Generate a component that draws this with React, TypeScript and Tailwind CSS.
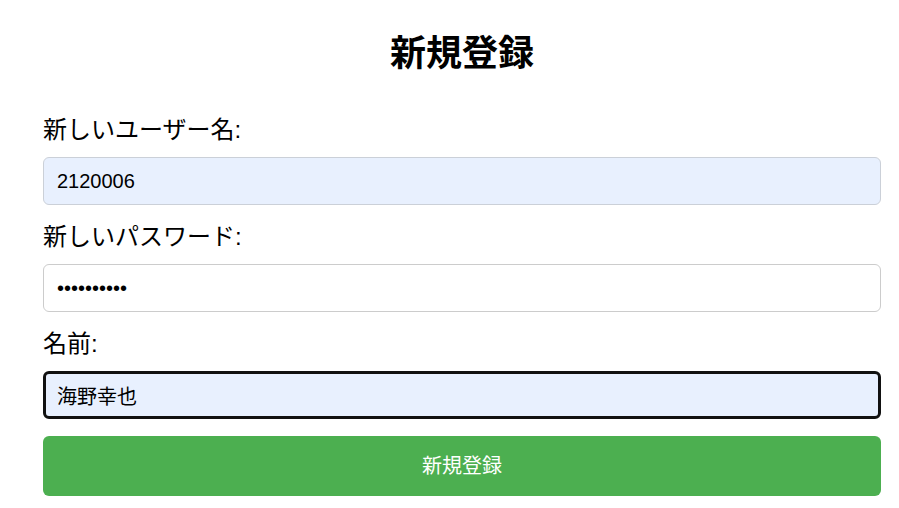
const font = { fontFamily: '"Liberation Sans", "Noto Sans CJK JP", sans-serif' };

const fields = [
  { label: "新しいユーザー名:", value: "2120006", type: "text", style: "autofill" },
  { label: "新しいパスワード:", value: "abcdefghij", type: "password", style: "plain" },
  { label: "名前:", value: "海野幸也", type: "text", style: "focused" },
];

const inputClass = {
  autofill: "border border-[#cbd0d8] bg-[#e8f0fe] pl-[13px]",
  plain: "border border-[#cccccc] bg-white pl-[13px]",
  focused: "border-[3px] border-[#111111] bg-[#e8f0fe] pl-[11px]",
};

const App = () => {
  return (
    <div className="min-h-[508px] bg-white text-black" style={font}>
      <div className="ml-[43px] w-[838px] pt-[30px]">
        <h2 className="h-[48px] text-center text-[36px] font-bold leading-[48px]">新規登録</h2>

        <form className="mt-[34px] flex flex-col" onSubmit={(e) => e.preventDefault()}>
          {fields.map((f, i) => (
            <div key={f.label} className={i === 0 ? "" : "mt-[14px]"}>
              <label className="block h-[36px] text-[24px] leading-[36px]">{f.label}</label>
              <input
                type={f.type}
                readOnly
                value={f.value}
                className={`mt-[9px] box-border block h-[48px] w-full rounded-[6px] pr-3 text-[20px] text-black outline-none ${inputClass[f.style as keyof typeof inputClass]}`}
                style={font}
              />
            </div>
          ))}

          <button
            type="submit"
            className="mt-[17px] h-[60px] w-full rounded-[6px] bg-[#4caf50] text-[20px] text-white"
            style={font}
          >
            新規登録
          </button>
        </form>
      </div>
    </div>
  );
};

export default App;
